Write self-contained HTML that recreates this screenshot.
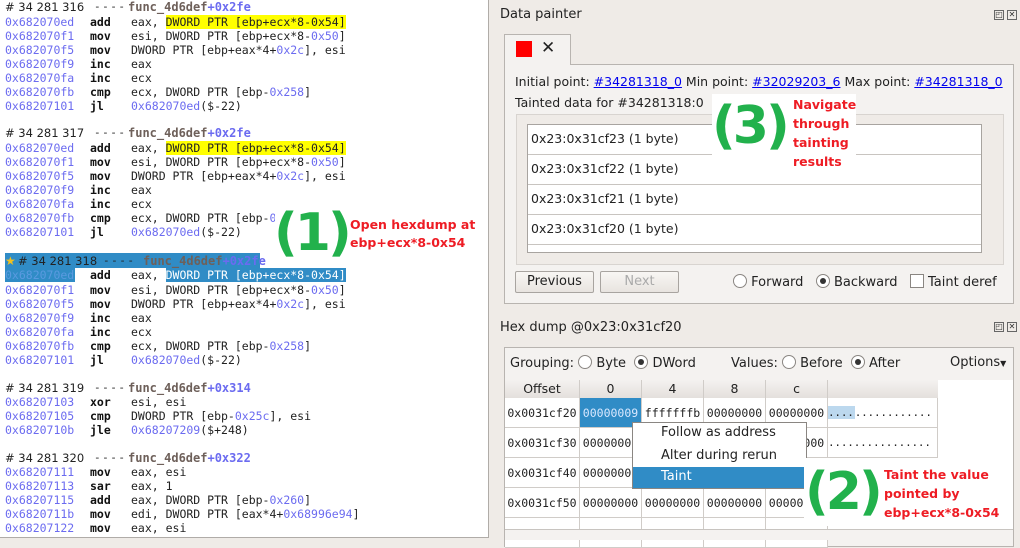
<!DOCTYPE html>
<html><head><meta charset="utf-8"><style>
*{margin:0;padding:0;box-sizing:border-box}
body{width:1020px;height:540px;background:#efebe7;position:relative;overflow:hidden;font-family:"DejaVu Sans","Liberation Sans",sans-serif;font-size:12.5px;color:#222}
.abs{position:absolute}
#left{left:0;top:0;width:489px;height:538px;background:#fff;border-right:1px solid #b0aca8;border-bottom:1px solid #b0aca8;overflow:hidden}
.ln{position:absolute;left:5px;width:480px;height:14px;line-height:14px;font-family:"DejaVu Sans Mono",monospace;font-size:11.5px;white-space:pre;color:#222}
.ad{color:#6b6bf0}
.mn{position:absolute;left:85px;font-weight:bold;color:#111}
.op{position:absolute;left:126px}
.b{color:#6b6bf0}
.hd{font-family:"DejaVu Sans",sans-serif;font-size:11.5px;position:absolute;left:0}
.dash{position:absolute;left:89px;font-family:"DejaVu Sans Mono",monospace;font-size:11px;letter-spacing:1.5px}
.fnw{position:absolute;left:123px;font-size:12px}
.fn{font-family:"DejaVu Sans Mono",monospace;font-weight:bold;color:#6e605a}
.fo{color:#6b6bf0;font-weight:bold}
.yl{background:#ffff00}
.sel{background:#308cc6;color:#fff}
.big{font-family:"DejaVu Sans",sans-serif;font-weight:bold;color:#22b14c;font-size:52px;line-height:60px;letter-spacing:-3px}
.red{font-family:"DejaVu Sans",sans-serif;font-weight:bold;color:#ee1c24;font-size:12.5px;line-height:18px}
.lnk{color:#0000ee;text-decoration:underline}
.radio{display:inline-block;width:14px;height:14px;border:1px solid #8a8682;border-radius:50%;background:#fff;vertical-align:-2px;position:relative}
.radio.on::after{content:"";position:absolute;left:3px;top:3px;width:6px;height:6px;border-radius:50%;background:#333}
.btn{position:absolute;height:22px;border:1px solid #a8a4a0;border-radius:2px;background:linear-gradient(#f8f6f4,#e8e4e0);text-align:center;line-height:20px;font-size:13px}
.hx{font-family:"DejaVu Sans Mono",monospace;font-size:11.5px}
.cell{position:absolute;height:30px;line-height:30px;border-right:1px solid #d0ccc8;border-bottom:1px solid #d0ccc8;text-align:center;background:#fff;overflow:hidden;white-space:nowrap}
.hcell{position:absolute;top:380px;height:18px;line-height:18px;text-align:center;border-right:1px solid #d0ccc8;background:linear-gradient(#f4f2f0,#e4e0dc)}
.dk{position:absolute;width:10px;height:10px;border:1px solid #666;font-size:8px;line-height:8px;text-align:center;color:#333}
</style></head><body>

<div id="left" class="abs">
<div class="ln" style="top:0"><span class="hd"># 34 281 316</span><span class="dash">----</span><span class="fnw"><span class="fn">func_4d6def</span><span class="fo">+0x2fe</span></span></div>
<div class="ln" style="top:15px"><span class="ad">0x682070ed</span><span class="mn">add</span><span class="op">eax, <span class="yl">DWORD PTR [ebp+ecx*8-0x54]</span></span></div>
<div class="ln" style="top:29px"><span class="ad">0x682070f1</span><span class="mn">mov</span><span class="op">esi, DWORD PTR [ebp+ecx*8-<span class="b">0x50</span>]</span></div>
<div class="ln" style="top:43px"><span class="ad">0x682070f5</span><span class="mn">mov</span><span class="op">DWORD PTR [ebp+eax*4+<span class="b">0x2c</span>], esi</span></div>
<div class="ln" style="top:57px"><span class="ad">0x682070f9</span><span class="mn">inc</span><span class="op">eax</span></div>
<div class="ln" style="top:71px"><span class="ad">0x682070fa</span><span class="mn">inc</span><span class="op">ecx</span></div>
<div class="ln" style="top:85px"><span class="ad">0x682070fb</span><span class="mn">cmp</span><span class="op">ecx, DWORD PTR [ebp-<span class="b">0x258</span>]</span></div>
<div class="ln" style="top:99px"><span class="ad">0x68207101</span><span class="mn">jl</span><span class="op"><span class="b">0x682070ed</span>($-22)</span></div>

<div class="ln" style="top:126px"><span class="hd"># 34 281 317</span><span class="dash">----</span><span class="fnw"><span class="fn">func_4d6def</span><span class="fo">+0x2fe</span></span></div>
<div class="ln" style="top:141px"><span class="ad">0x682070ed</span><span class="mn">add</span><span class="op">eax, <span class="yl">DWORD PTR [ebp+ecx*8-0x54]</span></span></div>
<div class="ln" style="top:155px"><span class="ad">0x682070f1</span><span class="mn">mov</span><span class="op">esi, DWORD PTR [ebp+ecx*8-<span class="b">0x50</span>]</span></div>
<div class="ln" style="top:169px"><span class="ad">0x682070f5</span><span class="mn">mov</span><span class="op">DWORD PTR [ebp+eax*4+<span class="b">0x2c</span>], esi</span></div>
<div class="ln" style="top:183px"><span class="ad">0x682070f9</span><span class="mn">inc</span><span class="op">eax</span></div>
<div class="ln" style="top:197px"><span class="ad">0x682070fa</span><span class="mn">inc</span><span class="op">ecx</span></div>
<div class="ln" style="top:211px"><span class="ad">0x682070fb</span><span class="mn">cmp</span><span class="op">ecx, DWORD PTR [ebp-<span class="b">0</span></span></div>
<div class="ln" style="top:225px"><span class="ad">0x68207101</span><span class="mn">jl</span><span class="op"><span class="b">0x682070ed</span>($-22)</span></div>

<div class="abs sel" style="left:5px;top:253px;width:255px;height:15px"></div>
<div class="ln" style="top:254px;color:#222"><span class="hd" style="left:0;color:#f0c020;font-size:12px">★</span><span class="hd" style="left:13px"># 34 281 318</span><span class="dash" style="left:98px">----</span><span class="fnw" style="left:138px"><span class="fn">func_4d6def</span><span class="fo">+0x2fe</span></span></div>
<div class="abs sel" style="left:5px;top:268px;width:70px;height:14px"></div>
<div class="ln" style="top:268px"><span class="ad" style="color:#5a9ae0">0x682070ed</span><span class="mn">add</span><span class="op">eax, <span class="sel">DWORD PTR [ebp+ecx*8-0x54]</span></span></div>
<div class="ln" style="top:283px"><span class="ad">0x682070f1</span><span class="mn">mov</span><span class="op">esi, DWORD PTR [ebp+ecx*8-<span class="b">0x50</span>]</span></div>
<div class="ln" style="top:297px"><span class="ad">0x682070f5</span><span class="mn">mov</span><span class="op">DWORD PTR [ebp+eax*4+<span class="b">0x2c</span>], esi</span></div>
<div class="ln" style="top:311px"><span class="ad">0x682070f9</span><span class="mn">inc</span><span class="op">eax</span></div>
<div class="ln" style="top:325px"><span class="ad">0x682070fa</span><span class="mn">inc</span><span class="op">ecx</span></div>
<div class="ln" style="top:339px"><span class="ad">0x682070fb</span><span class="mn">cmp</span><span class="op">ecx, DWORD PTR [ebp-<span class="b">0x258</span>]</span></div>
<div class="ln" style="top:353px"><span class="ad">0x68207101</span><span class="mn">jl</span><span class="op"><span class="b">0x682070ed</span>($-22)</span></div>

<div class="ln" style="top:381px"><span class="hd"># 34 281 319</span><span class="dash">----</span><span class="fnw"><span class="fn">func_4d6def</span><span class="fo">+0x314</span></span></div>
<div class="ln" style="top:395px"><span class="ad">0x68207103</span><span class="mn">xor</span><span class="op">esi, esi</span></div>
<div class="ln" style="top:409px"><span class="ad">0x68207105</span><span class="mn">cmp</span><span class="op">DWORD PTR [ebp-<span class="b">0x25c</span>], esi</span></div>
<div class="ln" style="top:423px"><span class="ad">0x6820710b</span><span class="mn">jle</span><span class="op"><span class="b">0x68207209</span>($+248)</span></div>

<div class="ln" style="top:451px"><span class="hd"># 34 281 320</span><span class="dash">----</span><span class="fnw"><span class="fn">func_4d6def</span><span class="fo">+0x322</span></span></div>
<div class="ln" style="top:465px"><span class="ad">0x68207111</span><span class="mn">mov</span><span class="op">eax, esi</span></div>
<div class="ln" style="top:479px"><span class="ad">0x68207113</span><span class="mn">sar</span><span class="op">eax, 1</span></div>
<div class="ln" style="top:493px"><span class="ad">0x68207115</span><span class="mn">add</span><span class="op">eax, DWORD PTR [ebp-<span class="b">0x260</span>]</span></div>
<div class="ln" style="top:507px"><span class="ad">0x6820711b</span><span class="mn">mov</span><span class="op">edi, DWORD PTR [eax*4+<span class="b">0x68996e94</span>]</span></div>
<div class="ln" style="top:521px"><span class="ad">0x68207122</span><span class="mn">mov</span><span class="op">eax, esi</span></div>

<div class="abs" style="left:275px;top:200px;width:72px;height:66px;background:#fff"></div>
<div class="abs big" style="left:274px;top:203px">(1)</div>
<div class="abs red" style="left:350px;top:216px">Open hexdump at<br>ebp+ecx*8-0x54</div>
</div>

<!-- Data painter -->
<div class="abs" style="left:500px;top:7px;font-size:13px">Data painter</div>
<div class="dk" style="left:994px;top:10px">◰</div><div class="dk" style="left:1007px;top:10px">✕</div>
<div class="abs" style="left:504px;top:34px;width:67px;height:31px;background:#f4f2f0;border:1px solid #b8b4b0;border-bottom:none;z-index:2"></div>
<div class="abs" style="left:516px;top:41px;width:16px;height:16px;background:#f00;z-index:3"></div>
<div class="abs" style="left:541px;top:38px;font-size:17px;font-weight:bold;z-index:3">✕</div>
<div class="abs" style="left:504px;top:64px;width:510px;height:240px;background:#f4f2f0;border:1px solid #b8b4b0"></div>
<div class="abs" style="left:515px;top:74px">Initial point: <span class="lnk">#34281318_0</span> Min point: <span class="lnk">#32029203_6</span> Max point: <span class="lnk">#34281318_0</span></div>
<div class="abs" style="left:515px;top:95px">Tainted data for #34281318:0</div>
<div class="abs" style="left:516px;top:114px;width:488px;height:151px;border:1px solid #d8d4d0;background:#efebe7"></div>
<div class="abs" style="left:527px;top:124px;width:455px;height:129px;background:#fff;border:1px solid #a8a4a0"></div>
<div class="abs" style="left:528px;top:125px;width:453px">
 <div style="height:30px;line-height:28px;border-bottom:1px solid #c8c4c0;padding-left:3px">0x23:0x31cf23 (1 byte)</div>
 <div style="height:30px;line-height:28px;border-bottom:1px solid #c8c4c0;padding-left:3px">0x23:0x31cf22 (1 byte)</div>
 <div style="height:30px;line-height:28px;border-bottom:1px solid #c8c4c0;padding-left:3px">0x23:0x31cf21 (1 byte)</div>
 <div style="height:30px;line-height:28px;border-bottom:1px solid #c8c4c0;padding-left:3px">0x23:0x31cf20 (1 byte)</div>
</div>
<div class="btn" style="left:515px;top:271px;width:79px">Previous</div>
<div class="btn" style="left:600px;top:271px;width:79px;color:#aaa">Next</div>
<div class="abs" style="left:733px;top:274px;font-size:13px"><span class="radio"></span> Forward&nbsp;&nbsp; <span class="radio on"></span> Backward&nbsp;&nbsp; <span class="radio" style="border-radius:0"></span> Taint deref</div>
<div class="abs" style="left:712px;top:94px;width:144px;height:76px;background:#fff"></div>
<div class="abs big" style="left:712px;top:96px">(3)</div>
<div class="abs red" style="left:793px;top:95px;line-height:19px">Navigate<br>through<br>tainting<br>results</div>

<!-- Hex dump -->
<div class="abs" style="left:500px;top:320px;font-size:13px">Hex dump @0x23:0x31cf20</div>
<div class="dk" style="left:994px;top:322px">◰</div><div class="dk" style="left:1007px;top:322px">✕</div>
<div class="abs" style="left:504px;top:347px;width:510px;height:200px;background:#f4f2f0;border:1px solid #b8b4b0"></div>
<div class="abs" style="left:510px;top:355px;font-size:13px">Grouping: <span class="radio"></span> Byte&nbsp; <span class="radio on"></span> DWord</div>
<div class="abs" style="left:731px;top:355px;font-size:13px">Values: <span class="radio"></span> Before&nbsp; <span class="radio on"></span> After</div>
<div class="abs" style="left:950px;top:355px;font-size:13px">Options<span style="font-size:8px">▼</span></div>
<div class="abs" style="left:505px;top:380px;width:508px;height:150px;background:#fff"></div>
<div class="hcell" style="left:505px;width:75px">Offset</div>
<div class="hcell" style="left:580px;width:62px">0</div>
<div class="hcell" style="left:642px;width:62px">4</div>
<div class="hcell" style="left:704px;width:62px">8</div>
<div class="hcell" style="left:766px;width:62px">c</div>
<div class="hcell" style="left:828px;width:110px;border-right:none"></div>
<div class="hx">
<div class="cell" style="left:505px;top:398px;width:75px">0x0031cf20</div>
<div class="cell" style="left:580px;top:398px;width:62px;background:#308cc6;color:#d8e8ff">00000009</div>
<div class="cell" style="left:642px;top:398px;width:62px">fffffffb</div>
<div class="cell" style="left:704px;top:398px;width:62px">00000000</div>
<div class="cell" style="left:766px;top:398px;width:62px">00000000</div>
<div class="cell" style="left:828px;top:398px;width:110px;text-align:left;font-size:11px;letter-spacing:-0.2px"><span style="background:#bcd8ee;padding-right:1px">....</span>............</div>
<div class="cell" style="left:505px;top:428px;width:75px">0x0031cf30</div>
<div class="cell" style="left:580px;top:428px;width:62px">00000000</div>
<div class="cell" style="left:642px;top:428px;width:62px"></div>
<div class="cell" style="left:704px;top:428px;width:62px"></div>
<div class="cell" style="left:766px;top:428px;width:62px">00000000</div>
<div class="cell" style="left:828px;top:428px;width:110px;text-align:left;font-size:11px;letter-spacing:-0.2px">................</div>
<div class="cell" style="left:505px;top:458px;width:75px">0x0031cf40</div>
<div class="cell" style="left:580px;top:458px;width:62px">00000000</div>
<div class="cell" style="left:642px;top:458px;width:62px"></div>
<div class="cell" style="left:704px;top:458px;width:62px"></div>
<div class="cell" style="left:766px;top:458px;width:62px"></div>
<div class="cell" style="left:505px;top:488px;width:75px">0x0031cf50</div>
<div class="cell" style="left:580px;top:488px;width:62px">00000000</div>
<div class="cell" style="left:642px;top:488px;width:62px">00000000</div>
<div class="cell" style="left:704px;top:488px;width:62px">00000000</div>
<div class="cell" style="left:766px;top:488px;width:62px">00000000</div>
<div class="cell" style="left:505px;top:518px;width:75px"></div>
<div class="cell" style="left:580px;top:518px;width:62px"></div>
<div class="cell" style="left:642px;top:518px;width:62px"></div>
<div class="cell" style="left:704px;top:518px;width:62px"></div>
<div class="cell" style="left:766px;top:518px;width:62px"></div>
</div>
<div class="abs" style="left:505px;top:529px;width:508px;height:11px;background:#f4f2f0;border-top:1px solid #c8c4c0"></div>
<div class="abs" style="left:632px;top:422px;width:175px;height:67px;background:#fff;border:1px solid #8a8682;font-size:13px">
 <div style="height:22px;line-height:20px;padding-left:28px">Follow as address</div>
 <div style="height:22px;line-height:22px;padding-left:28px">Alter during rerun</div>
 <div style="height:21px;line-height:20px;padding-left:28px;background:#308cc6;color:#fff">Taint</div>
</div>
<div class="abs" style="left:804px;top:458px;width:70px;height:68px;background:#fff"></div>
<div class="abs big" style="left:805px;top:462px">(2)</div>
<div class="abs red" style="left:884px;top:465px;line-height:19px">Taint the value<br>pointed by<br>ebp+ecx*8-0x54</div>
</body></html>
